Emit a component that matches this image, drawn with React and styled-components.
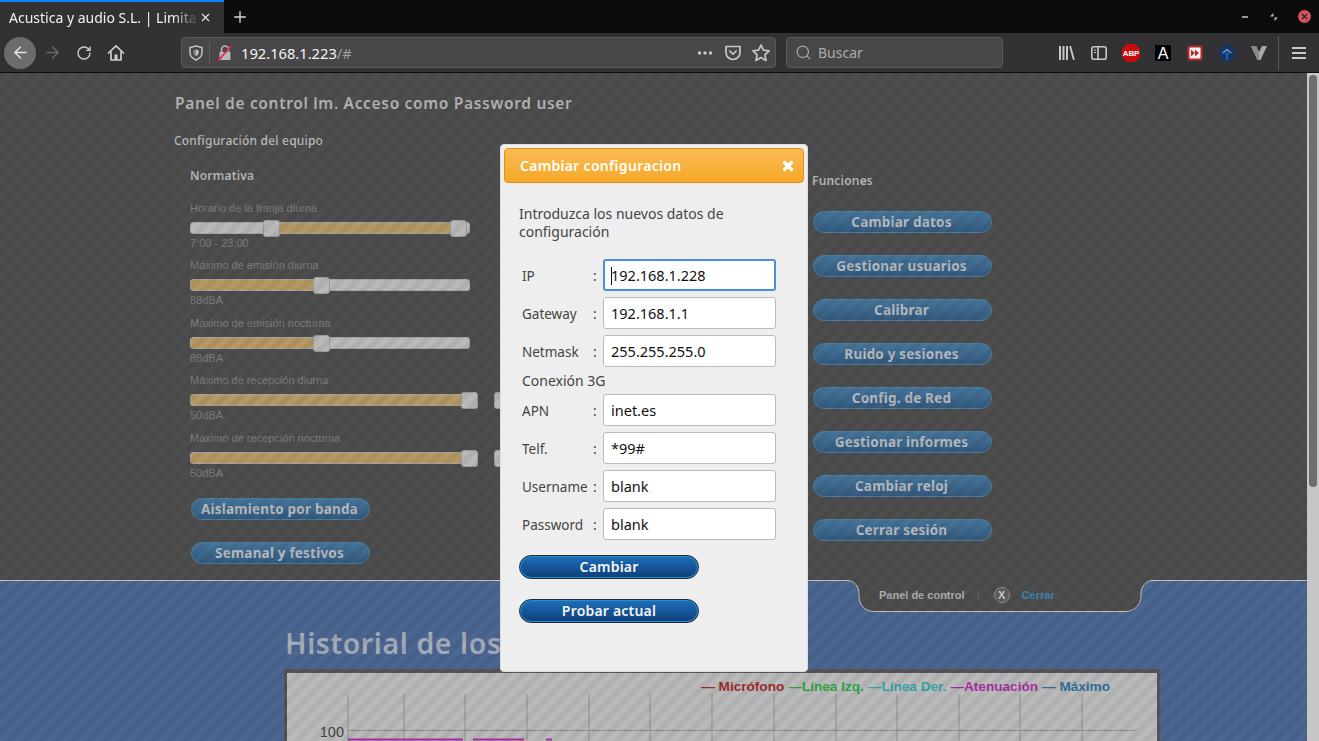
import React from "react";
import styled, { createGlobalStyle } from "styled-components";
import { ArrowLeft, ArrowRight, RotateCw, Search, X, Plus } from "lucide-react";

const ubuntu = `"Noto Sans", "Open Sans", sans-serif`;
const arial = `"Liberation Sans", Arial, sans-serif`;

const GlobalStyle = createGlobalStyle`
  html, body {
    margin: 0;
    padding: 0;
    width: 1319px;
    height: 741px;
    overflow: hidden;
    background: #323234;
  }
  * { box-sizing: border-box; }
`;

const TabBar = styled.div`
  height: 33px;
  background: #0c0c0c;
  display: flex;
  align-items: stretch;
  font-family: ${ubuntu};
`;
const ActiveTab = styled.div`
  width: 224px;
  background: #323234;
  border-top: 2px solid #0a84ff;
  display: flex;
  align-items: center;
  padding: 0 12px 0 9px;
  color: #f2f2f2;
  font-size: 14px;
  svg { flex: none; }
`;
const TabTitle = styled.span`
  flex: 1;
  white-space: nowrap;
  overflow: hidden;
  -webkit-mask-image: linear-gradient(90deg, #000 86%, transparent);
  mask-image: linear-gradient(90deg, #000 86%, transparent);
`;
const NewTab = styled.div`
  width: 32px;
  color: #d8d8d8;
  display: flex;
  align-items: center;
  justify-content: center;
`;
const WindowControls = styled.div`
  margin-left: auto;
  display: flex;
  align-items: center;
  gap: 20px;
  padding-right: 8px;
`;
const CloseDot = styled.div`
  width: 13px;
  height: 13px;
  border-radius: 50%;
  background: #d2555c;
  color: #222;
  display: flex;
  align-items: center;
  justify-content: center;
`;

const NavBar = styled.div`
  height: 40px;
  background: #323234;
  border-bottom: 1px solid #0c0c0c;
  display: flex;
  align-items: center;
  padding: 0 0 0 4px;
  font-family: ${ubuntu};
`;
const BackCircle = styled.div`
  width: 32px;
  height: 32px;
  border-radius: 50%;
  background: #6c6c6e;
  color: #e6e6e6;
  display: flex;
  align-items: center;
  justify-content: center;
`;
const NavIcon = styled.div`
  width: 32px;
  height: 32px;
  display: flex;
  align-items: center;
  justify-content: center;
  color: ${(p) => (p.$dim ? "#6a6a6c" : "#cfcfd1")};
`;
const UrlBar = styled.div`
  width: 595px;
  height: 31px;
  margin-left: 49px;
  background: #474749;
  border: 1px solid #5a5a5c;
  border-radius: 4px;
  display: flex;
  align-items: center;
  padding: 0 2px 0 5px;
  color: #f4f4f4;
  font-size: 14.7px;
`;
const UrlDivider = styled.div`
  width: 1px;
  height: 22px;
  background: #5f5f61;
  margin: 0 6px 0 4px;
`;
const UrlHost = styled.span`
  margin-left: 7px;
`;
const UrlRest = styled.span`
  color: #a0a0a2;
`;
const UrlActions = styled.div`
  margin-left: auto;
  display: flex;
  align-items: center;
  gap: 4px;
  color: #c8c8ca;
`;
const SearchBar = styled.div`
  width: 217px;
  height: 31px;
  margin-left: 10px;
  background: #474749;
  border: 1px solid #5a5a5c;
  border-radius: 4px;
  display: flex;
  align-items: center;
  gap: 6px;
  padding-left: 8px;
  color: #acacae;
  font-size: 14px;
`;
const Extensions = styled.div`
  margin-left: 48px;
  display: flex;
  align-items: center;
  color: #c8c8ca;
`;
const ExtSlot = styled.div`
  width: ${(p) => p.$w || 32}px;
  height: 32px;
  display: flex;
  align-items: center;
  justify-content: center;
`;
const ToolbarDivider = styled.div`
  width: 1px;
  height: 34px;
  background: #5a5a5c;
  margin: 0 4px 0 3px;
`;

const Viewport = styled.div`
  height: 668px;
  display: flex;
  overflow: hidden;
`;
const Page = styled.div`
  position: relative;
  width: 1307px;
  height: 668px;
  overflow: hidden;
`;
const ScrollTrack = styled.div`
  width: 12px;
  background: #c6c6c6;
  padding: 2px 2px 0;
`;
const ScrollThumb = styled.div`
  height: 412px;
  background: #6e6e6e;
  border-radius: 4px;
`;

const TopPanel = styled.div`
  position: relative;
  height: 508px;
  background: #4d4d4d;
  border-bottom: 1px solid #c4c4c4;
  padding: 20px 0 0 174px;
  font-family: ${ubuntu};
`;
const PanelTitle = styled.h1`
  margin: 0 0 0 1px;
  font-size: 15.5px;
  line-height: 20px;
  font-weight: 600;
  letter-spacing: 0.68px;
  color: #b4b4b4;
`;
const SectionTitle = styled.h2`
  margin: 20px 0 0;
  font-size: 12px;
  line-height: 16px;
  font-weight: 500;
  letter-spacing: 0.2px;
  color: #bcbcbc;
`;
const Columns = styled.div`
  display: flex;
  margin-top: 9px;
`;
const NormColumn = styled.div`
  width: 312px;
  height: 415px;
  padding: 10px 0 0 15px;
  border-left: 1px solid rgba(255, 255, 255, 0.04);
  background: linear-gradient(rgba(255, 255, 255, 0.04), rgba(255, 255, 255, 0.04)) right top / 1px 384px no-repeat;
`;
const ColumnTitle = styled.h3`
  margin: 0;
  font-size: 12px;
  line-height: 16px;
  font-weight: 600;
  letter-spacing: 0.2px;
  color: #b8b8b8;
`;
const SliderList = styled.div`
  display: flex;
  flex-direction: column;
  gap: 8.5px;
  margin-top: ${(p) => p.$top}px;
`;
const SliderRow = styled.div`
  display: grid;
  grid-template-rows: 21px 14px 14px;
  width: 280px;
  height: 49px;
  font-family: ${arial};
  font-size: 11px;
  line-height: 14px;
  color: #7d7d7d;
`;
const SliderLabel = styled.div`
  white-space: nowrap;
`;
const Track = styled.div`
  position: relative;
  height: 12px;
  border-radius: 3px;
  border: 1px solid #a6a6a6;
  background: #b9b9b9;
`;
const TrackFill = styled.div`
  position: absolute;
  top: 0;
  bottom: 0;
  background: #b59862;
`;
const Thumb = styled.div`
  position: absolute;
  top: -3px;
  width: 17px;
  height: 17px;
  margin-left: -9px;
  border-radius: 3px;
  border: 1px solid #9c9c9c;
  background: #b9b9b9;
`;
const SideButtons = styled.div`
  display: flex;
  flex-direction: column;
  gap: 22px;
  margin-top: ${(p) => p.$top}px;
  margin-left: 1px;
`;
const GhostButton = styled.div`
  width: 179px;
  height: 22px;
  padding-right: 2px;
  border-radius: 11px;
  border: 1px solid #4a7f9f;
  background: linear-gradient(#46759a, #345a7e);
  color: #b6b9be;
  font-weight: 700;
  font-size: 13.5px;
  line-height: 21px;
  letter-spacing: 0.2px;
  text-align: center;
  white-space: nowrap;
`;
const HiddenColumn = styled.div`
  width: 326px;
  padding: 42.9px 0 0 16px;
`;
const FunctionsColumn = styled.div`
  padding-top: 15px;
`;

const BottomTab = styled.div`
  position: absolute;
  left: 845px;
  top: 507px;
  width: 308px;
  height: 33px;
  padding: 0 0 3px 34px;
  display: flex;
  align-items: center;
  font-family: ${arial};
  font-size: 11px;
  font-weight: 700;
  color: #aeaeae;
`;
const TabShape = styled.svg`
  position: absolute;
  left: 0;
  top: 0;
`;
const TabText = styled.span`
  position: relative;
`;
const TabDivider = styled.span`
  position: relative;
  width: 1px;
  height: 10px;
  background: #5f5f5f;
  margin: 0 15px 0 13px;
`;
const CloseCircle = styled.span`
  position: relative;
  width: 16px;
  height: 16px;
  border-radius: 50%;
  border: 1px solid #8c8c8c;
  background: #5c5c5c;
  color: #d0d0d0;
  margin-right: 12px;
  display: flex;
  align-items: center;
  justify-content: center;
  font-size: 11px;
`;
const CloseLink = styled.span`
  position: relative;
  color: #3c88b2;
`;

const BluePanel = styled.div`
  height: 160px;
  background: #4b6691;
  padding: 42px 0 0 285px;
  font-family: ${ubuntu};
`;
const HistoryTitle = styled.h2`
  margin: 0;
  font-size: 28.5px;
  line-height: 40px;
  font-weight: 600;
  letter-spacing: 0.6px;
  color: #a6adb9;
`;
const ChartFrame = styled.div`
  width: 876px;
  height: 120px;
  margin: 6px 0 0 -1px;
  border: 4px solid #555;
  border-width: 4px 3px 0;
  background: #bababa;
`;
const Legend = styled.div`
  display: flex;
  justify-content: flex-end;
  gap: 4px;
  padding: 6px 47px 0 0;
  font-family: ${arial};
  font-size: 13.6px;
  line-height: 15px;
  font-weight: 700;
  white-space: pre;
`;
const LegendItem = styled.span`
  color: ${(p) => p.$color};
`;
const ChartSvg = styled.svg`
  display: block;
`;

const Overlay = styled.div`
  position: absolute;
  inset: 0;
  background: repeating-linear-gradient(
    135deg,
    rgba(0, 0, 0, 0.055) 0 5.66px,
    transparent 5.66px 11.32px
  );
`;

const Dialog = styled.div`
  position: absolute;
  left: 500px;
  top: 71px;
  width: 308px;
  height: 528px;
  padding: 3px 3px;
  background: #eee;
  border: 1px solid #ddd;
  border-radius: 4px;
  font-family: ${ubuntu};
  color: #444;
`;
const DialogHeader = styled.div`
  height: 35px;
  border: 1px solid #e78f08;
  border-radius: 4px;
  background: linear-gradient(#f9bb54, #f6a828);
  display: flex;
  align-items: center;
  justify-content: space-between;
  padding: 0 8px 0 15px;
  color: #fff;
  font-size: 14px;
  font-weight: 600;
  letter-spacing: 0.3px;
`;
const DialogBody = styled.div`
  padding: 22px 0 0 15px;
`;
const Intro = styled.p`
  margin: 0 0 18px;
  width: 250px;
  font-size: 14px;
  line-height: 18px;
`;
const FormRow = styled.div`
  display: flex;
  align-items: center;
  height: 32px;
  margin-bottom: 6px;
  padding-left: 3px;
  font-size: 13.5px;
`;
const RowLabel = styled.span`
  width: 71px;
  margin-top: 2px;
  white-space: nowrap;
`;
const RowColon = styled.span`
  width: 10px;
  margin-top: 2px;
`;
const FieldWrap = styled.div`
  position: relative;
  width: 173px;
  height: 32px;
  &::before {
    content: "";
    display: ${(p) => (p.$focused ? "block" : "none")};
    position: absolute;
    left: 8px;
    top: 8px;
    width: 1px;
    height: 18px;
    background: #111;
  }
`;
const Input = styled.input`
  width: 100%;
  height: 100%;
  border: ${(p) => (p.$focused ? "2px solid #4a90d9" : "1px solid #bbb")};
  padding: 0 0 0 ${(p) => (p.$focused ? 6 : 7)}px;
  border-radius: 3px;
  background: #fff;
  color: #111;
  font-family: ${ubuntu};
  font-size: 14.5px;
  outline: none;
`;
const GroupLabel = styled.div`
  margin: 3px 0 5px;
  padding-left: 3px;
  line-height: 16px;
  font-size: 14px;
`;
const DialogButtons = styled.div`
  display: flex;
  flex-direction: column;
  gap: 20px;
  margin-top: 15px;
`;
const PrimaryButton = styled.div`
  width: 180px;
  height: 24px;
  border-radius: 12px;
  border: 1px solid #1d2c40;
  box-shadow: inset 0 0 0 1px #2f8ccb;
  background: linear-gradient(#1c70ba, #0f3d78);
  color: #f4f4f4;
  font-size: 14px;
  font-weight: 600;
  line-height: 22px;
  letter-spacing: 0.2px;
  text-align: center;
`;

const normativa = [
  { label: "Horario de la franja diurna", value: "7:00 - 23:00", from: 29.2, to: 96.3 },
  { label: "Máximo de emisión diurna", value: "88dBA", from: 0, to: 47 },
  { label: "Máximo de emisión nocturna", value: "88dBA", from: 0, to: 47 },
  { label: "Máximo de recepción diurna", value: "50dBA", from: 0, to: 100.4 },
  { label: "Máximo de recepción nocturna", value: "50dBA", from: 0, to: 100.4 },
];

const hiddenSliders = [50, 50, 50, 0, 0];

const functions = [
  "Cambiar datos",
  "Gestionar usuarios",
  "Calibrar",
  "Ruido y sesiones",
  "Config. de Red",
  "Gestionar informes",
  "Cambiar reloj",
  "Cerrar sesión",
];

const network = [
  { label: "IP", value: "192.168.1.228", focused: true },
  { label: "Gateway", value: "192.168.1.1" },
  { label: "Netmask", value: "255.255.255.0" },
];
const mobile = [
  { label: "APN", value: "inet.es" },
  { label: "Telf.", value: "*99#" },
  { label: "Username", value: "blank" },
  { label: "Password", value: "blank" },
];

const legend = [
  { text: "— Micrófono", color: "#a02a2a" },
  { text: "—Línea Izq.", color: "#2fa544" },
  { text: "—Línea Der.", color: "#35a5a5" },
  { text: "—Atenuación", color: "#a52fa2" },
  { text: "— Máximo", color: "#2f6d9c" },
];

const gridLines = [348, 404, 465, 527, 589, 650, 712, 774, 836, 897, 959, 1020, 1082];

const ShieldIcon = () => (
  <svg width="18" height="18" viewBox="0 0 18 18" fill="none">
    <path d="M9 2l6 1.6v5c0 3.6-2.6 6-6 7.4-3.4-1.400-6-3.800-6-7.400v-5z" stroke="#c4c4c6" strokeWidth="1.500" />
    <path d="M9 5.500l2.600.7v2.600c0 1.600-1.100 2.700-2.600 3.400z" fill="#c4c4c6" />
    <path d="M9 5.500l-2.600.7v2.600c0 1.600 1.100 2.700 2.600 3.400z" fill="#8a8a8c" />
  </svg>
);

const BrokenLockIcon = () => (
  <svg width="18" height="18" viewBox="0 0 18 18" fill="none">
    <path d="M5.500 8V5.500a3.500 3.500 0 0 1 7 0V8" stroke="#b8b8ba" strokeWidth="1.600" />
    <rect x="3.500" y="8" width="11" height="8" rx="1" fill="#b8b8ba" />
    <path d="M2 17L15.500 1.500" stroke="#ee1d4a" strokeWidth="1.800" />
  </svg>
);

const HomeIcon = () => (
  <svg width="18" height="18" viewBox="0 0 18 18" fill="none" stroke="currentColor" strokeWidth="1.700" strokeLinejoin="round">
    <path d="M1.500 9L9 1.800 16.500 9" strokeLinecap="round" />
    <path d="M4 7.500V16h10V7.500" />
    <rect x="7.500" y="10.500" width="3" height="5.500" fill="currentColor" stroke="none" />
  </svg>
);

const PocketIcon = () => (
  <svg width="18" height="18" viewBox="0 0 18 18" fill="none" stroke="#c8c8ca" strokeWidth="1.700">
    <path d="M2 2.500h14v6a7 7 0 0 1-14 0z" strokeLinejoin="round" />
    <path d="M5.800 7l3.200 3.100L12.200 7" strokeLinecap="round" strokeLinejoin="round" />
  </svg>
);

const StarIcon = () => (
  <svg width="20" height="20" viewBox="0 0 20 20" fill="none" stroke="#c8c8ca" strokeWidth="1.700" strokeLinejoin="round">
    <path d="M10 2l2.400 5.200 5.600.7-4.100 3.900 1.100 5.600-5-2.800-5 2.800 1.100-5.600L2 7.900l5.600-.7z" />
  </svg>
);

const DotsIcon = () => (
  <svg width="16" height="6" viewBox="0 0 16 6" fill="#c8c8ca">
    <circle cx="2.500" cy="3" r="1.700" />
    <circle cx="8" cy="3" r="1.700" />
    <circle cx="13.500" cy="3" r="1.700" />
  </svg>
);

const LibraryIcon = () => (
  <svg width="16" height="14" viewBox="0 0 16 14" fill="#c8c8ca">
    <rect x="0" y="0" width="2" height="14" />
    <rect x="3.500" y="0" width="2" height="14" />
    <rect x="7" y="0" width="2" height="14" />
    <path d="M10.200.4l1.800-.6L15.800 13.500l-1.800.5z" />
  </svg>
);

const SidebarIcon = () => (
  <svg width="16" height="14" viewBox="0 0 16 14" fill="none" stroke="#c8c8ca" strokeWidth="1.600">
    <rect x="0.800" y="0.800" width="14.400" height="12.400" rx="2" />
    <path d="M7 1v12" />
    <path d="M3 4h2M3 6.500h2" strokeWidth="1.200" />
  </svg>
);

const AbpIcon = () => (
  <svg width="18" height="18" viewBox="1 1 16 16">
    <path d="M5.500 1h7L17 5.500v7L12.500 17h-7L1 12.500v-7z" fill="#c70d0d" />
    <text x="9" y="11.800" textAnchor="middle" fontFamily={arial} fontSize="7" fontWeight="700" fill="#fff">ABP</text>
  </svg>
);

const LetterIcon = () => (
  <svg width="16" height="16" viewBox="0 0 16 16">
    <rect width="16" height="16" fill="#000" />
    <text x="8" y="14.400" textAnchor="middle" fontFamily={arial} fontSize="16" fill="#fff">A</text>
  </svg>
);

const SkipIcon = () => (
  <svg width="16" height="16" viewBox="0 0 16 16">
    <rect x="0.500" y="0.500" width="15" height="15" rx="2" fill="#b82a2a" />
    <rect x="2.500" y="2.500" width="11" height="11" rx="1" fill="#f2f2f2" />
    <path d="M4 4.500L8 8l-4 3.500zM8 4.500L12 8l-4 3.500z" fill="#b82a2a" />
  </svg>
);

const GlobeIcon = () => (
  <svg width="16" height="16" viewBox="0 0 16 16">
    <circle cx="8" cy="8" r="8" fill="#123766" />
    <path d="M3 8L8 3.500 13 8l-1.300.6L8 5.600 4.300 8.600z" fill="#7f95c8" />
    <path d="M8 6.800l1.800 3H8.800V15H7.200V9.800H6.200z" fill="#1f6fb5" />
  </svg>
);

const VeeIcon = () => (
  <svg width="16" height="14" viewBox="0 0 16 14">
    <path d="M0 0h5l3 6 3-6h5L9.500 14h-3z" fill="#a8a8aa" />
    <path d="M5 0l3 6v8H6.500L0 0z" fill="#8a8a8c" />
  </svg>
);

const MenuIcon = () => (
  <svg width="14" height="12" viewBox="0 0 14 12" fill="#c8c8ca">
    <rect y="0" width="14" height="2" />
    <rect y="5" width="14" height="2" />
    <rect y="10" width="14" height="2" />
  </svg>
);

const RestoreIcon = () => (
  <svg width="8" height="8" viewBox="0 0 8 8">
    <path d="M0 3.500L3.500 0v3.500zM8 4.500L4.500 8V4.500z" fill="#bbb" />
  </svg>
);

const MinimizeIcon = () => (
  <svg width="8" height="8" viewBox="0 0 8 8">
    <rect y="3" width="6" height="2" fill="#999" />
  </svg>
);

const Slider = ({ label, value, from, to, handles }) => (
  <SliderRow>
    <SliderLabel>{label}</SliderLabel>
    <Track>
      <TrackFill style={{ left: `${from}%`, width: `${to - from}%` }} />
      {handles.map((h) => (
        <Thumb key={h} style={{ left: `${h}%` }} />
      ))}
    </Track>
    <div>{value}</div>
  </SliderRow>
);

const App = () => {
  return (
    <>
      <GlobalStyle />
      <TabBar>
        <ActiveTab>
          <TabTitle>Acustica y audio S.L. | Limita</TabTitle>
          <X size={13} color="#e8e8e8" strokeWidth={2} />
        </ActiveTab>
        <NewTab>
          <Plus size={18} strokeWidth={1.8} />
        </NewTab>
        <WindowControls>
          <MinimizeIcon />
          <RestoreIcon />
          <CloseDot>
            <X size={9} strokeWidth={3} />
          </CloseDot>
        </WindowControls>
      </TabBar>

      <NavBar>
        <BackCircle>
          <ArrowLeft size={19} strokeWidth={1.8} />
        </BackCircle>
        <NavIcon $dim>
          <ArrowRight size={19} strokeWidth={1.8} />
        </NavIcon>
        <NavIcon>
          <RotateCw size={16} strokeWidth={2} />
        </NavIcon>
        <NavIcon>
          <HomeIcon />
        </NavIcon>
        <UrlBar>
          <ShieldIcon />
          <UrlDivider />
          <BrokenLockIcon />
          <UrlHost>
            192.168.1.223<UrlRest>/#</UrlRest>
          </UrlHost>
          <UrlActions>
            <ExtSlot $w={24}><DotsIcon /></ExtSlot>
            <ExtSlot $w={24}><PocketIcon /></ExtSlot>
            <ExtSlot $w={24}><StarIcon /></ExtSlot>
          </UrlActions>
        </UrlBar>
        <SearchBar>
          <Search size={17} strokeWidth={1.6} />
          Buscar
        </SearchBar>
        <Extensions>
          <ExtSlot><LibraryIcon /></ExtSlot>
          <ExtSlot><SidebarIcon /></ExtSlot>
          <ExtSlot><AbpIcon /></ExtSlot>
          <ExtSlot><LetterIcon /></ExtSlot>
          <ExtSlot><SkipIcon /></ExtSlot>
          <ExtSlot><GlobeIcon /></ExtSlot>
          <ExtSlot><VeeIcon /></ExtSlot>
          <ToolbarDivider />
          <ExtSlot><MenuIcon /></ExtSlot>
        </Extensions>
      </NavBar>

      <Viewport>
        <Page>
          <TopPanel>
            <PanelTitle>Panel de control lm. Acceso como Password user</PanelTitle>
            <SectionTitle>Configuración del equipo</SectionTitle>
            <Columns>
              <NormColumn>
                <ColumnTitle>Normativa</ColumnTitle>
                <SliderList $top={16.9}>
                  {normativa.map((s) => (
                    <Slider
                      key={s.label}
                      label={s.label}
                      value={s.value}
                      from={s.from}
                      to={s.to}
                      handles={s.from > 0 ? [s.from, s.to] : [s.to]}
                    />
                  ))}
                </SliderList>
                <SideButtons $top={18.1}>
                  <GhostButton>Aislamiento por banda</GhostButton>
                  <GhostButton>Semanal y festivos</GhostButton>
                </SideButtons>
              </NormColumn>
              <HiddenColumn>
                <SliderList $top={0}>
                  {hiddenSliders.map((h, i) => (
                    <Slider key={i} from={0} to={h} handles={[h]} />
                  ))}
                </SliderList>
              </HiddenColumn>
              <FunctionsColumn>
                <ColumnTitle>Funciones</ColumnTitle>
                <SideButtons $top={22}>
                  {functions.map((f) => (
                    <GhostButton key={f}>{f}</GhostButton>
                  ))}
                </SideButtons>
              </FunctionsColumn>
            </Columns>
            <BottomTab>
              <TabShape width="308" height="33" viewBox="0 0 308 33">
                <path
                  d="M0 0.500H2C9 0.500 14 6 14 14V16C14 25 20 31.500 29 31.500H280C289 31.500 296 25 296 16V14C296 6 301 0.500 308 0.500V-2H0Z"
                  fill="#4d4d4d"
                />
                <path
                  d="M0 0.500H2C9 0.500 14 6 14 14V16C14 25 20 31.500 29 31.500H280C289 31.500 296 25 296 16V14C296 6 301 0.500 308 0.500"
                  fill="none"
                  stroke="#c4c4c4"
                />
              </TabShape>
              <TabText>Panel de control</TabText>
              <TabDivider />
              <CloseCircle>X</CloseCircle>
              <CloseLink>Cerrar</CloseLink>
            </BottomTab>
          </TopPanel>

          <BluePanel>
            <HistoryTitle>Historial de los</HistoryTitle>
            <ChartFrame>
              <Legend>
                {legend.map((l) => (
                  <LegendItem key={l.text} $color={l.color}>{l.text}</LegendItem>
                ))}
              </Legend>
              <ChartSvg width="870" height="60" viewBox="287 695 870 60">
                {gridLines.map((x) => (
                  <line key={x} x1={x} x2={x} y1="695" y2="755" stroke="#8f8f8f" />
                ))}
                <line x1="348" x2="1137" y1="731.500" y2="731.500" stroke="#8f8f8f" />
                <text x="344" y="738" textAnchor="end" fontFamily={arial} fontSize="14.500" fill="#444">100</text>
                <path d="M348 740.500H463M473 740.500H524M546 740.500H552" stroke="#a52fa2" strokeWidth="2" />
              </ChartSvg>
            </ChartFrame>
          </BluePanel>

          <Overlay />

          <Dialog>
            <DialogHeader>
              Cambiar configuracion
              <X size={14} strokeWidth={5.5} />
            </DialogHeader>
            <DialogBody>
              <Intro>Introduzca los nuevos datos de configuración</Intro>
              {network.map((r) => (
                <FormRow key={r.label}>
                  <RowLabel>{r.label}</RowLabel>
                  <RowColon>:</RowColon>
                  <FieldWrap $focused={r.focused}>
                    <Input readOnly value={r.value} $focused={r.focused} />
                  </FieldWrap>
                </FormRow>
              ))}
              <GroupLabel>Conexión 3G</GroupLabel>
              {mobile.map((r) => (
                <FormRow key={r.label}>
                  <RowLabel>{r.label}</RowLabel>
                  <RowColon>:</RowColon>
                  <FieldWrap>
                    <Input readOnly value={r.value} />
                  </FieldWrap>
                </FormRow>
              ))}
              <DialogButtons>
                <PrimaryButton>Cambiar</PrimaryButton>
                <PrimaryButton>Probar actual</PrimaryButton>
              </DialogButtons>
            </DialogBody>
          </Dialog>
        </Page>
        <ScrollTrack>
          <ScrollThumb />
        </ScrollTrack>
      </Viewport>
    </>
  );
};

export default App;
